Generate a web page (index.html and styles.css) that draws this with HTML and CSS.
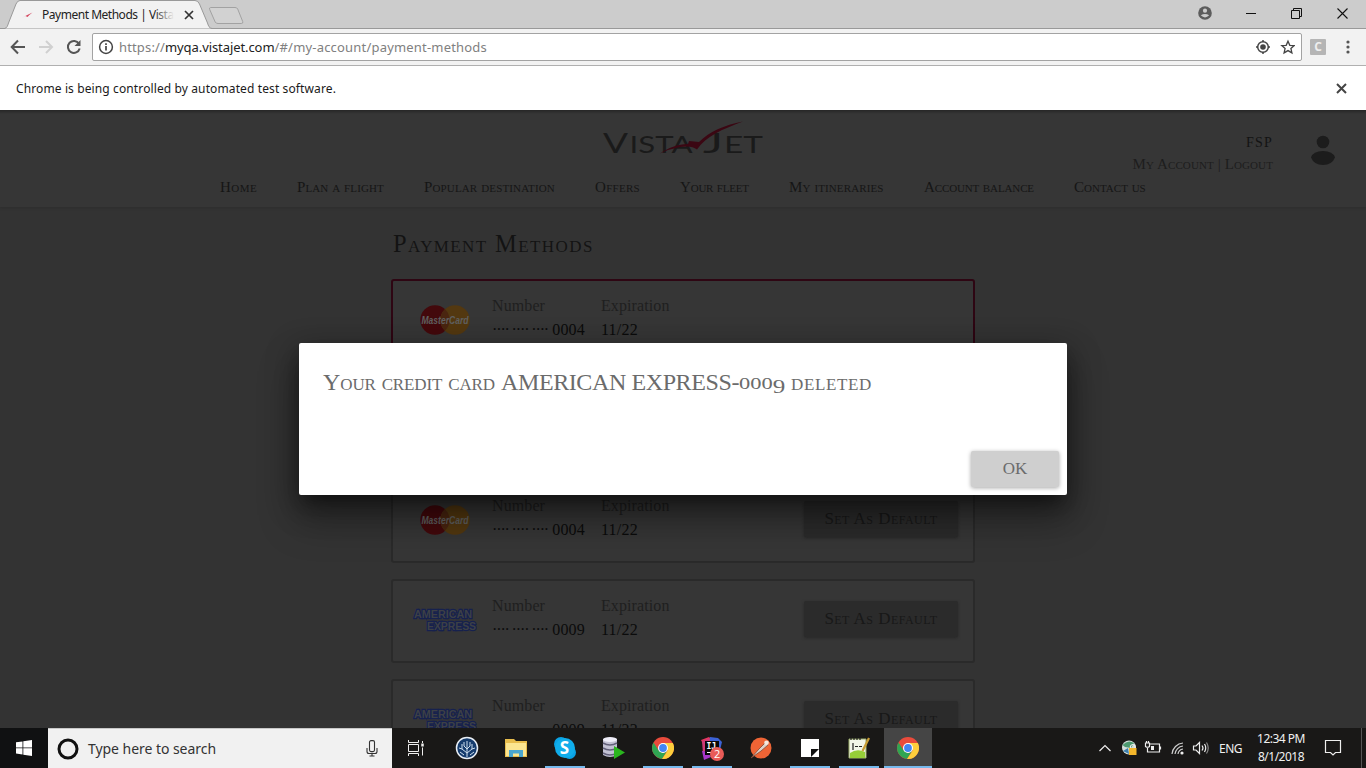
FILE: index.html
```html
<!DOCTYPE html>
<html lang="en">
<head>
<meta charset="utf-8">
<title>Payment Methods | VistaJet</title>
<link rel="stylesheet" href="styles.css">
</head>
<body>
<svg width="0" height="0" class="defs">
  <defs>
    <symbol id="chrome" viewBox="0 0 22 22">
      <circle cx="11" cy="11" r="11" fill="#e94b3c"/>
      <path d="M1.500 5.500A11 11 0 0 0 10 21.950L15.300 13.500 11 16 6.500 13.300Z" fill="#2fa552"/>
      <path d="M20.800 6H11l4.700 7.500L10 21.950A11 11 0 0 0 20.800 6Z" fill="#fdce3c"/>
      <circle cx="11" cy="11" r="5" fill="#fff"/>
      <circle cx="11" cy="11" r="3.900" fill="#4285f4"/>
    </symbol>
    <symbol id="mastercard" viewBox="0 0 50 30">
      <circle cx="15" cy="15" r="14.700" fill="#43090c"/>
      <circle cx="35" cy="15" r="14.700" fill="#533810"/>
      <path d="M25 4.300a14.700 14.700 0 0 1 0 21.400a14.700 14.700 0 0 1 0-21.400Z" fill="#4a2510"/>
      <text x="1.500" y="18.600" textLength="47" lengthAdjust="spacingAndGlyphs" class="mc-text">MasterCard</text>
    </symbol>
    <symbol id="amex" viewBox="0 0 64 24">
      <text x="1" y="10" textLength="58" lengthAdjust="spacingAndGlyphs" class="ax-text">AMERICAN</text>
      <text x="14" y="22" textLength="49" lengthAdjust="spacingAndGlyphs" class="ax-text">EXPRESS</text>
    </symbol>
  </defs>
</svg>

<div class="tabstrip">
  <svg class="tabs" width="260" height="29" viewBox="0 0 260 29">
    <path d="M0 28.500H4.500C7 28 7.500 26 8.500 23L16 4Q17.500 .5 20 .5H195Q198 .5 199.500 4L207.500 23C208.500 26 209 28 212 28.500" fill="#f2f2f2" stroke="#999"/>
    <path d="M210.500 7.500H235q2 0 2.700 1.500l5 12.500q.8 2-1.500 2H218q-2 0-2.800-1.500l-5.500-12.500q-.6-2 .8-2Z" fill="#d2d2d2" stroke="#a2a2a2"/>
    <path d="M21.500 18Q27 15 32.500 12.500Q29 15 27.500 17L25.500 16Z" fill="#d4475f"/>
  </svg>
  <div class="tab-label">Payment Methods | Vista</div>
  <svg class="tab-x" width="10" height="10" viewBox="0 0 10 10"><path d="M1 1L9 9M9 1L1 9" stroke="#333" stroke-width="1.700"/></svg>
  <div class="winbtns">
    <svg width="14" height="14" viewBox="0 0 14 14"><circle cx="7" cy="7" r="6.800" fill="#5c5c5c"/><circle cx="7" cy="4.700" r="2.100" fill="#ccc"/><path d="M2.800 9.300Q7 6.500 11.200 9.300Q7 13.500 2.800 9.300Z" fill="#ccc"/></svg>
    <svg width="10" height="10" viewBox="0 0 10 10"><path d="M0 5.500H10" stroke="#111"/></svg>
    <svg width="11" height="11" viewBox="0 0 11 11"><path d="M.5 2.500H8.500V10.500H.5ZM2.500 2.500V.5H10.500V8.500H8.500" fill="none" stroke="#111"/></svg>
    <svg width="11" height="11" viewBox="0 0 11 11"><path d="M.5 .5L10.500 10.500M10.500 .5L.5 10.500" stroke="#111" stroke-width="1.100"/></svg>
  </div>
</div>

<div class="toolbar">
  <svg width="92" height="36" viewBox="0 0 92 36" fill="none" stroke-width="2">
    <path d="M25 18H12.500M18 11.500L11.700 18L18 24.500" stroke="#555"/>
    <path d="M39 18H51.500M46 12L52 18L46 24" stroke="#d0d0d0"/>
    <path d="M79 14.700A6 6 0 1 0 79.700 19.500" stroke="#555"/><path d="M80.500 11V17H74.500Z" fill="#555"/>
  </svg>
  <div class="omnibox">
    <svg width="16" height="16" viewBox="0 0 16 16"><circle cx="8" cy="8" r="6.400" fill="none" stroke="#444" stroke-width="1.500"/><path d="M8 7V11.500M8 4.300V6" stroke="#444" stroke-width="1.700"/></svg>
    <span class="url"><span class="scheme">https://</span><span class="host">myqa.vistajet.com</span><span class="path">/#/my-account/payment-methods</span></span>
    <svg class="omni-icons" width="42" height="18" viewBox="0 0 42 18" fill="none" stroke="#444">
      <circle cx="10" cy="9" r="5.300" stroke-width="1.500"/><circle cx="10" cy="9" r="2.800" fill="#444" stroke="none"/><path d="M10 2V4M10 14V16M3 9H5M15 9H17" stroke-width="1.500"/>
      <path d="M35 3.200L36.800 7.300L41.200 7.600L37.900 10.500L38.900 14.900L35 12.600L31.100 14.900L32.100 10.500L28.800 7.600L33.200 7.300Z" stroke-width="1.300"/>
    </svg>
  </div>
  <span class="ext">C</span>
  <svg class="dots" width="4" height="14" viewBox="0 0 4 14" fill="#555"><circle cx="2" cy="2" r="1.600"/><circle cx="2" cy="7" r="1.600"/><circle cx="2" cy="12" r="1.600"/></svg>
</div>

<div class="infobar">
  <span class="info-text">Chrome is being controlled by automated test software.</span>
  <svg width="11" height="11" viewBox="0 0 11 11"><path d="M1 1L10 10M10 1L1 10" stroke="#444" stroke-width="2"/></svg>
</div>

<div class="page">
  <header class="site-header">
    <div class="header-top">
      <svg class="logo" width="164" height="36" viewBox="0 0 164 36">
        <g class="logo-text">
          <text x="2" y="32.500" class="big" textLength="25" lengthAdjust="spacingAndGlyphs">V</text>
          <text x="28.500" y="32.500" textLength="63" lengthAdjust="spacingAndGlyphs">ISTA</text>
          <text x="102" y="32.500" class="big" textLength="20" lengthAdjust="spacingAndGlyphs">J</text>
          <text x="123" y="32.500" textLength="39" lengthAdjust="spacingAndGlyphs">ET</text>
        </g>
        <path d="M59 33.500C67 28 77 24 87 24L88 21L98 22C108 12 123 5 142 1.500C122 9 105 16 96 29.500C92 26 86 26 79 27Q68 29 59 33.500Z" fill="#3b0713"/>
      </svg>
      <div class="account">
        <div class="who">FSP</div>
        <div class="links">My Account | Logout</div>
      </div>
      <svg class="avatar" width="26" height="32" viewBox="0 0 26 32" fill="#1c1c1c"><circle cx="13" cy="7" r="6.300"/><path d="M1 22.500Q3 16 13 16T25 22.500Q22 30 13 30T1 22.500Z"/></svg>
    </div>
    <nav>
      <span class="n1">Home</span><span class="n2">Plan a flight</span><span class="n3">Popular destination</span><span class="n4">Offers</span><span class="n5">Your fleet</span><span class="n6">My itineraries</span><span class="n7">Account balance</span><span class="n8">Contact us</span>
    </nav>
  </header>
  <main>
    <h1>Payment Methods</h1>
    <section class="card default"><svg class="brand"><use href="#mastercard"/></svg><div class="field num"><label>Number</label><b><i>···· ···· ····</i> 0004</b></div><div class="field"><label>Expiration</label><b>11/22</b></div></section>
    <section class="card"></section>
    <section class="card"><svg class="brand"><use href="#mastercard"/></svg><div class="field num"><label>Number</label><b><i>···· ···· ····</i> 0004</b></div><div class="field"><label>Expiration</label><b>11/22</b></div><button class="set">Set As Default</button></section>
    <section class="card"><svg class="brand ax"><use href="#amex"/></svg><div class="field num"><label>Number</label><b><i>···· ···· ····</i> 0009</b></div><div class="field"><label>Expiration</label><b>11/22</b></div><button class="set">Set As Default</button></section>
    <section class="card"><svg class="brand ax"><use href="#amex"/></svg><div class="field num"><label>Number</label><b><i>···· ···· ····</i> 0009</b></div><div class="field"><label>Expiration</label><b>11/22</b></div><button class="set">Set As Default</button></section>
  </main>
  <div class="dialog">
    <h2><span class="m1">Your credit card</span><span class="m2">AMERICAN EXPRESS-</span><span class="m3">000<span class="nine">9</span></span><span class="m4">deleted</span></h2>
    <button class="ok">OK</button>
  </div>
</div>

<div class="taskbar">
  <div class="start"><svg width="16" height="16" viewBox="0 0 16 16" fill="#fff"><path d="M0 2.300L6.500 1.400V7.500H0ZM7.300 1.300L16 0V7.500H7.300ZM0 8.300H6.500V14.500L0 13.600ZM7.300 8.300H16V16L7.300 14.700Z"/></svg></div>
  <div class="search">
    <svg width="22" height="22" viewBox="0 0 22 22"><circle cx="11" cy="11" r="9" fill="none" stroke="#111" stroke-width="3"/></svg>
    <span class="search-text">Type here to search</span>
    <svg class="mic" width="12" height="17" viewBox="0 0 12 17" fill="none" stroke="#333" stroke-width="1.100"><rect x="3.500" y=".6" width="5" height="11" rx="1.500"/><path d="M1 8V11.500Q1 13.500 3 13.500H9Q11 13.500 11 11.500V8M6 13.500V16M3.500 16H8.500"/></svg>
  </div>
  <div class="tile view"><svg width="18" height="16" viewBox="0 0 18 16" fill="none" stroke="#eee"><path d="M1.500 0V2.500H11.500V0M1.500 16V13.500H11.500V16M1.500 4.500H11.500V11.500H1.500ZM15.500 1V3M15.500 7.500V15.500"/><path d="M15.500 3.500V6.500" stroke-width="2.500"/></svg></div>
  <div class="apps">
    <div class="tile"><svg width="24" height="24" viewBox="0 0 24 24"><circle cx="12" cy="12" r="10.500" fill="#153c6e" stroke="#e8eef5" stroke-width="1.500"/><path d="M12 21V5M12 17L7 13V8M12 17L17 13V8M12 13L9 10V6M12 13L15 10V6M7 13L4 12M17 13L20 12M9 19L5 16M15 19L19 16" fill="none" stroke="#cfe0ef"/></svg></div>
    <div class="tile"><svg width="22" height="20" viewBox="0 0 22 20"><path d="M0 1H9L11 3H22V19H0Z" fill="#e8bd4d"/><path d="M1 5H21V18H1Z" fill="#fbe591"/><path d="M4 19V12H18V19H14V15.500H8V19Z" fill="#4aa6cf"/></svg></div>
    <div class="tile run"><svg width="24" height="24" viewBox="0 0 24 24"><circle cx="8" cy="8" r="7" fill="#0aa3e6"/><circle cx="16.500" cy="16.500" r="6.500" fill="#0aa3e6"/><circle cx="12" cy="12" r="10" fill="#10adeb"/><text x="6.800" y="18" class="skype">S</text></svg></div>
    <div class="tile"><svg width="24" height="24" viewBox="0 0 24 24"><path d="M1 3V19Q8 23 15 19V3Z" fill="#c2c1d3"/><path d="M1 7Q8 11 15 7M1 12Q8 16 15 12M1 17Q8 21 15 17" fill="none" stroke="#626079" stroke-width="1.600"/><ellipse cx="8" cy="3.500" rx="7" ry="2.500" fill="#eeedf8"/><path d="M12 10L23 16.500L12 23Z" fill="#2ab51e"/></svg></div>
    <div class="tile run"><svg width="22" height="22"><use href="#chrome"/></svg></div>
    <div class="tile run"><svg width="24" height="25" viewBox="0 0 24 25"><path d="M1 4L9 1L13 5L5 12Z" fill="#e8365d"/><path d="M10 1L18 2L22 6L20 14L8 10Z" fill="#3c62d6"/><path d="M2 5L10 2V8L3 18Z" fill="#ce3a78"/><path d="M2 15L8 16L11 21L4 24Z" fill="#a736c9"/><rect x="5" y="5" width="14" height="14" fill="#080808"/><text x="6.500" y="13" class="ij">IJ</text><path d="M7 16.500H11" stroke="#fff"/><circle cx="17" cy="18" r="7" fill="#e85b57"/><text x="14" y="22" class="badge">2</text></svg></div>
    <div class="tile"><svg width="22" height="22" viewBox="0 0 22 22"><circle cx="11" cy="11" r="10.500" fill="#ee6435"/><path d="M1 21L9 12L16 5L18 8L11 14Z" fill="#ddd0c8" stroke="#85452f" stroke-width=".8"/><circle cx="16.500" cy="5.800" r="2.300" fill="#f4e8df"/></svg></div>
    <div class="tile run"><svg width="18" height="18" viewBox="0 0 18 18"><path d="M0 0H18V18H0Z" fill="#fff"/><path d="M10 10H18L10 18Z" fill="#111"/></svg></div>
    <div class="tile run"><svg width="22" height="24" viewBox="0 0 22 24"><path d="M1 3H18V22H1Z" fill="#f2f5e8" stroke="#9bad68"/><path d="M2 17Q9 12 17 16V22H2Z" fill="#96ce38"/><path d="M5 7V14M7 10.500H10M11 10.500H14M3 2V4M6 2V4M9 2V4M12 2V4" stroke="#222" stroke-width="1.200"/><path d="M21 2L14.500 15" stroke="#c99d35" stroke-width="2.300"/></svg></div>
    <div class="tile run active"><svg width="22" height="22"><use href="#chrome"/></svg></div>
  </div>
  <div class="tray">
    <svg width="112" height="20" viewBox="0 0 112 20" fill="none" stroke="#eee" stroke-width="1.200">
      <path d="M1.500 13L7 7.500L12.500 13"/>
      <g stroke="none"><circle cx="31" cy="9.500" r="7" fill="#d3dedc"/><path d="M24.500 7Q30 1 36 5L33 10L27 9Z" fill="#4c9970"/><path d="M25 13L30 10L31 16Z" fill="#3c7fae"/><rect x="31" y="10" width="7.500" height="7" fill="#f4b62b"/></g><path d="M32.500 10V8Q34.700 5 37 8V10"/>
      <path d="M52 6H61.500V14H53M62.500 8.500V11.500M47.500 5V8.500Q49.500 10 51.500 8.500V5ZM48.500 3V5M50.500 3V5M49.500 10V14H53"/><path d="M53 8H56V12H53Z" fill="#eee" stroke="none"/>
      <g opacity=".85"><path d="M74 16A12 12 0 0 1 85 5M77 16A9 9 0 0 1 85 8M80 16A6 6 0 0 1 85 11"/></g><circle cx="84" cy="15" r="1.600" fill="#eee" stroke="none"/>
      <path d="M95.500 8H98L101.500 4.500V15.500L98 12H95.500ZM104 7.500Q106 10 104 12.500M106.500 6Q109 10 106.500 14"/><path d="M108.500 4.500Q112 10 108.500 15.500" stroke="#888"/>
    </svg>
    <span class="eng">ENG</span>
    <div class="clock"><span>12:34 PM</span><span>8/1/2018</span></div>
    <svg class="note" width="18" height="18" viewBox="0 0 18 18" fill="none" stroke="#eee" stroke-width="1.200"><path d="M1.500 1.500H16.500V13.500H11.500L9 16L6.500 13.500H1.500Z"/></svg>
  </div>
</div>
</body>
</html>
```
FILE: styles.css
```css
* { box-sizing: border-box; }
body { margin: 0; width: 1366px; height: 768px; overflow: hidden; display: flex; flex-direction: column; font-family: "Noto Sans", "Open Sans", sans-serif; font-size: 12px; background: #333; }
.defs { position: absolute; }
svg { display: block; flex: none; }
button { border: 0; padding: 0; font: inherit; }
span { white-space: nowrap; }

.tabstrip { height: 29px; flex: none; background: #ccc; border-bottom: 1px solid #999; display: flex; align-items: flex-start; position: relative; }
.tabs { width: 260px; }
.tab-label { position: absolute; left: 42px; top: 6px; line-height: 17px; color: #222; letter-spacing: -.48px; white-space: nowrap; }
.tab-label::after { content: ""; position: absolute; right: 0; top: 0; width: 20px; height: 17px; background: linear-gradient(90deg, rgba(242,242,242,0), #f2f2f2); }
.tab-x { position: absolute; left: 184px; top: 10px; }
.winbtns { margin-left: auto; display: flex; align-items: center; height: 26px; gap: 35px; padding-right: 18px; }
.winbtns svg:first-child { margin-right: -1px; }

.toolbar { height: 37px; flex: none; background: #f2f2f2; border-bottom: 1px solid #b0b0b0; display: flex; align-items: flex-start; }
.omnibox { width: 1210px; height: 28px; margin-top: 4px; background: #fff; border: 1px solid #a3a3a3; border-radius: 2px; display: flex; align-items: center; padding-left: 5px; }
.url { margin-left: 5px; font-size: 13px; line-height: 20px; color: #808080; display: flex; }
.scheme { letter-spacing: .148px; }
.host { color: #222; letter-spacing: -.08px; }
.path { letter-spacing: .193px; }
.omni-icons { margin-left: auto; margin-right: 6px; }
.ext { width: 16px; height: 16px; margin: 10px 0 0 8px; border-radius: 1px; background: #b5b5b5; color: #eee; font: bold 12px/16px "Open Sans", sans-serif; text-align: center; }
.dots { margin: 11px 0 0 20px; }

.infobar { height: 44px; flex: none; background: #fff; display: flex; align-items: center; justify-content: space-between; padding: 0 19px 0 16px; color: #1a1a1a; }
.info-text { letter-spacing: .116px; }

.page { height: 618px; flex: none; position: relative; overflow: hidden; background: #333; font-family: "Liberation Serif", serif; }
.site-header { height: 97px; background: linear-gradient(#262626, #363636 4px); box-shadow: 0 1px 2px #2e2e2e; }
.header-top { height: 66px; display: flex; align-items: flex-start; padding-left: 601px; }
.logo { margin-top: 10px; overflow: visible; }
.logo-text { font-family: Lato, sans-serif; font-weight: 400; font-size: 23px; fill: #1a1a1a; }
.logo-text .big { font-size: 26px; }
.account { margin-left: auto; width: 160px; padding-top: 22px; text-align: right; color: #131313; font-size: 15px; line-height: 22px; font-variant: small-caps; white-space: nowrap; }
.who { font-size: 14px; letter-spacing: 1.200px; }
.links { color: #1d1d1d; letter-spacing: .11px; line-height: 20px; }
.avatar { margin: 25px 30px 0 37px; }
nav { display: flex; gap: 40px; padding: 2px 0 0 220px; font-size: 15px; line-height: 18px; font-variant: small-caps; color: #151515; }
.n1 { width: 37px; letter-spacing: .5px; }
.n2 { width: 87px; letter-spacing: .1px; }
.n3 { width: 131px; letter-spacing: .14px; }
.n4 { width: 45px; letter-spacing: .3px; }
.n5 { width: 69px; letter-spacing: -.2px; }
.n6 { width: 95px; letter-spacing: .12px; }
.n7 { width: 110px; letter-spacing: -.12px; }
.n8 { width: 72px; letter-spacing: .02px; }

main { width: 584px; margin-left: 391px; }
h1 { margin: 0; padding: 23px 0 0 2px; height: 72px; font-size: 24.500px; line-height: 28px; font-weight: 400; font-variant: small-caps; letter-spacing: 1.400px; color: #131313; }
.card { height: 84px; margin-bottom: 16px; border: 2px solid #2a2a2a; border-radius: 3px; background: #363636; display: flex; position: relative; padding-left: 19px; }
.card.default { border-color: #2e0613; }
.brand { width: 50px; height: 30px; margin: 24px 22px 0 8px; overflow: visible; }
.brand.ax { width: 64px; height: 24px; margin: 27px 15px 0 1px; }
.field { display: flex; flex-direction: column; padding-top: 13px; font-size: 16px; line-height: 24px; }
.field.num { width: 109px; }
.field label { color: #1f1f1f; letter-spacing: .1px; }
.field b { font-weight: 400; color: #0b0b0b; white-space: nowrap; letter-spacing: .2px; }
.field i { font-style: normal; letter-spacing: -1.138px; }
.set { position: absolute; right: 15px; top: 20px; width: 154px; height: 36px; background: #2b2b2b; border-radius: 2px; box-shadow: 0 1px 3px #272727; color: #181818; font-size: 17px; font-variant: small-caps; letter-spacing: .45px; white-space: nowrap; }
.mc-text { font: italic bold 10px "Liberation Sans", sans-serif; fill: #606060; }
.ax-text { font: bold 11.500px "Liberation Sans", sans-serif; fill: #3d4046; stroke: #16214e; stroke-width: 2.500px; paint-order: stroke; }

.dialog { position: absolute; left: 299px; top: 233px; width: 768px; height: 152px; background: #fff; border-radius: 2px; padding: 23px 24px; box-shadow: 0 11px 15px -7px rgba(0,0,0,.4), 0 24px 38px 3px rgba(0,0,0,.28), 0 9px 30px 4px rgba(0,0,0,.3); }
h2 { margin: 0; display: flex; font-size: 24px; line-height: 32px; font-weight: 400; color: #6b6b6b; font-variant: small-caps; }
.m1 { width: 172px; letter-spacing: -.115px; }
.m2 { margin-left: 6px; width: 238px; letter-spacing: -.394px; }
.m3 { width: 46px; font-size: 17px; padding-top: 2px; transform: scaleX(1.32); transform-origin: left; }
.m4 { margin-left: 6px; letter-spacing: .645px; }
.nine { font-size: 19px; vertical-align: -4px; line-height: 0; letter-spacing: -1px; }
.ok { position: absolute; right: 8px; bottom: 8px; width: 88px; height: 36px; border-radius: 2px; background: #cfcfcf; color: #6b6b6b; font-size: 17px; box-shadow: 0 1px 4px rgba(0,0,0,.35); }

.taskbar { height: 40px; flex: none; background: #191817; display: flex; color: #f0f0f0; }
.start { width: 48px; display: grid; place-items: center; background: #101112; }
.search { width: 344px; background: #f1f1f1; border-top: 1px solid #c8c8c8; display: flex; align-items: center; padding: 0 14px 0 9px; color: #333; font-size: 14px; }
.search-text { margin-left: 9px; letter-spacing: -.046px; }
.mic { margin-left: auto; }
.tile { width: 48px; height: 40px; display: grid; place-items: center; position: relative; }
.view { margin-right: 3px; }
.apps { display: flex; gap: 1px; }
.run::after { content: ""; position: absolute; left: 4px; right: 4px; bottom: 0; height: 2px; background: #76b9ed; }
.active { background: #454545; }
.active::after { left: 0; right: 0; }
.skype { font: bold 17px "Open Sans", sans-serif; fill: #fff; }
.ij { font: bold 8px "DejaVu Sans Mono", monospace; fill: #fff; }
.badge { font: 11px "Open Sans", sans-serif; fill: #fff; }
.tray { margin-left: auto; width: 268px; display: flex; align-items: center; }
.eng { width: 23px; margin-left: 9px; letter-spacing: -.51px; }
.clock { display: flex; flex-direction: column; align-items: center; width: 50px; margin-left: 14px; line-height: 18px; letter-spacing: -.5px; }
.note { margin-left: 18px; }
.tray::after { content: ""; width: 1px; height: 40px; background: #555; margin-left: 19px; }
```
